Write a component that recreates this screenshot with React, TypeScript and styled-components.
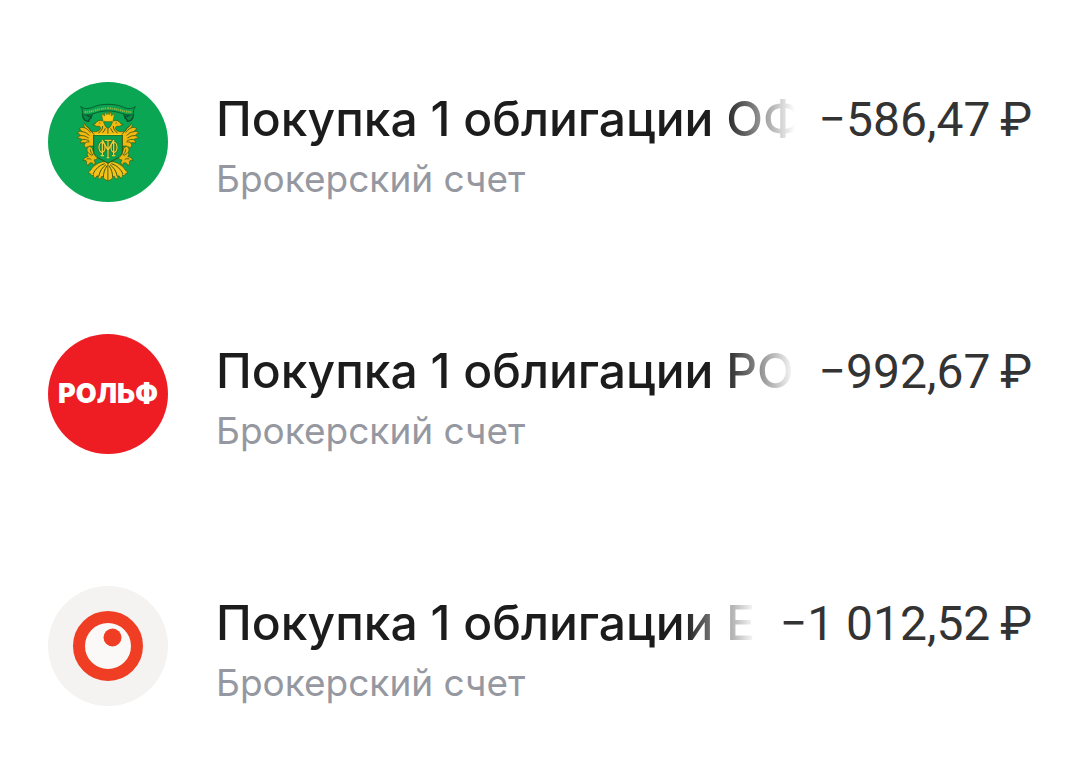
import React from "react";
import styled, { createGlobalStyle } from "styled-components";

const GlobalStyle = createGlobalStyle`
  *, *::before, *::after { box-sizing: border-box; }
  body {
    margin: 0;
    background: #ffffff;
    font-family: Inter, "Noto Sans", sans-serif;
  }
`;

const OperationList = styled.ul`
  display: flex;
  flex-direction: column;
  gap: 132px;
  margin: 0;
  padding: 82px 48px 64px;
  list-style: none;
`;

const Operation = styled.li`
  display: flex;
  align-items: center;
  gap: 48px;
`;

const Avatar = styled.div<{ $color: string }>`
  flex: none;
  display: flex;
  align-items: center;
  justify-content: center;
  width: 120px;
  height: 120px;
  border-radius: 50%;
  background: ${(p) => p.$color};
  overflow: hidden;

  svg {
    display: block;
    width: 100%;
    height: 100%;
  }
`;

const Wordmark = styled.span`
  color: #ffffff;
  font: 900 27px/32px Inter, "Noto Sans", sans-serif;
`;

const Details = styled.div`
  flex: 1;
  min-width: 0;
`;

const Headline = styled.div`
  display: flex;
  align-items: baseline;
  gap: 24px;
  line-height: 72px;
  white-space: nowrap;
`;

const Title = styled.span`
  flex: 1;
  min-width: 0;
  overflow: hidden;
  color: #1c1c1c;
  font-size: 48px;
  font-weight: 500;
  mask-image: linear-gradient(to left, transparent, #000 72px);
`;

const Amount = styled.span`
  color: #333333;
  font-family: Roboto, "Noto Sans", sans-serif;
  font-size: 48px;
`;

const Account = styled.div`
  color: #9598a0;
  font-size: 37px;
  line-height: 46px;
`;

function EagleHalf() {
  return (
    <g stroke="#3f5a12" strokeWidth="2" strokeLinejoin="round">
      <path
        d="M114 110c4-3 12-1 17 3 6 4 12 4 14-3M116 112c0 11 8 19 18 18-1-5 3-8 9-12"
        fill="#068a45"
        stroke="#0b4f2a"
        strokeWidth="4"
      />
      <path
        d="M122 136c-4 5-3 10 1 14-8-3-14-2-18 3 4 1 7 4 9 8-6-2-12 0-15 5 5 0 9 3 12 7-5 0-9 3-10 8 6-1 10 1 14 4-4 2-6 6-5 11 5-3 9-3 13-1-3 5-2 10 2 15 5-4 11-6 17-6h12v-38c-7 0-12-5-17-12-4-7-13-7-15-18z"
        fill="#f0b810"
      />
      <path
        d="M123 150c7 3 12 7 16 14M114 161c9 1 17 5 22 12M111 173c8-1 16 2 23 8M115 185c6-2 14 0 20 4M123 195c5-3 9-4 14-3M130 145c5 4 9 9 11 15"
        fill="none"
        strokeWidth="2.6"
      />
      <path
        d="M192 151c-5-2-9-7-11-14-3-8-9-11-16-9-5 1-8 4-11 9l-8 3c5 1 9 2 10 5 5 0 9-1 12 1 4 4 1 9-4 12-6 4-14 4-20 2 2 7 6 10 12 11h36z"
        fill="#f2b90f"
      />
      <path
        d="M166 135h3M176 144c0 9-5 16-13 21M184 151c-2 5-4 9-8 13"
        fill="none"
        strokeWidth="3"
      />
      <path
        d="M136 205c-8 4-9 13-4 18-3 5-3 9 1 13-8 0-14 5-16 12 5-2 9-1 11 2-2 5 0 10 4 14 1-6 4-9 9-10 5 0 8 4 9 9 4-6 4-12 0-17 7-1 12-5 14-11-9-5-18-12-19-25z"
        fill="#e9b714"
      />
      <path
        d="M139 214c0 6 3 12 8 17M133 224c3 4 7 7 12 8M128 243c5-2 10-1 14 2"
        fill="none"
        strokeWidth="2.6"
      />
      <path
        d="M192 252c-10-2-22-1-29 4-9 4-18 11-24 22-3-1-5 4-5 8 4 0 6 1 7 4 2 3 5 3 8 0-2 5 1 9 5 11 1-5 4-7 8-8-1 5 2 9 6 10 3-3 4-6 6-9 2 6 7 10 18 15z"
        fill="#f2c21a"
      />
      <path
        d="M182 257c-17 5-28 16-35 31M186 260c-12 9-19 20-22 36M189 263c-7 11-11 22-11 36"
        fill="none"
        strokeWidth="3"
      />
    </g>
  );
}

function FinanceMinistryEmblem() {
  return (
    <svg viewBox="12 12 360 360" aria-hidden="true">
      <EagleHalf />
      <g transform="matrix(-1 0 0 1 384 0)">
        <EagleHalf />
      </g>
      <path
        d="M110 86c12 8 24 7 38 1 14-6 28-8 44-8s30 2 44 8c14 6 26 7 38-1-5 7-7 14-5 24-16 3-29-1-42-6-23-7-47-7-70 0-13 5-26 9-42 6 2-10 0-17-5-24z"
        fill="#0aa351"
        stroke="#0b5c2e"
        strokeWidth="3"
      />
      <path
        d="M122 102c27 0 39-11 70-11s43 11 70 11"
        fill="none"
        stroke="#8fb440"
        strokeWidth="6"
        strokeDasharray="4 2 3 3 5 2"
      />
      <path
        d="M177 129l-5-23 10 8 1-12 6 8 3-10 3 10 6-8 1 12 10-8-5 23c-10 3-20 3-30 0z"
        fill="#f9c916"
        stroke="#5b6b12"
        strokeWidth="2"
      />
      <path
        d="M179 129c-8 4-8 10-4 15M205 129c8 4 8 10 4 15"
        fill="none"
        stroke="#e8c320"
        strokeWidth="3"
      />
      <path
        d="M149 171h86v52c0 15-24 20-43 33-19-13-43-18-43-33z"
        fill="#08a04e"
        stroke="#35510f"
        strokeWidth="3"
      />
      <path d="M151 169h82" stroke="#f6cf1c" strokeWidth="4" />
      <g fill="none" stroke="#365f17" strokeWidth="7">
        <ellipse cx="174" cy="208" rx="9" ry="15" />
        <ellipse cx="210" cy="208" rx="9" ry="15" />
        <path d="M175 186l17 31 17-31M175 186v47M209 186v47M182 187h20M192 187v52" />
      </g>
      <g fill="none" stroke="#e5d03a" strokeWidth="4">
        <ellipse cx="174" cy="208" rx="9" ry="15" />
        <ellipse cx="210" cy="208" rx="9" ry="15" />
        <path d="M175 186l17 31 17-31M175 186v47M209 186v47M182 187h20M192 187v52M170 233h10M204 233h10M188 239h8" />
      </g>
    </svg>
  );
}

function EyeLogo() {
  return (
    <svg viewBox="0 0 120 120" aria-hidden="true">
      <circle cx="60" cy="60" r="29" fill="#faf9f8" stroke="#ef3e23" strokeWidth="12" />
      <circle cx="64.5" cy="51.5" r="9" fill="#ef3e23" />
    </svg>
  );
}

const operations = [
  {
    title: "Покупка 1 облигации ОФ",
    amount: "−586,47\u2009₽",
    color: "#0aa653",
    logo: <FinanceMinistryEmblem />,
  },
  {
    title: "Покупка 1 облигации РО",
    amount: "−992,67\u2009₽",
    color: "#ee1c23",
    logo: <Wordmark>РОЛЬФ</Wordmark>,
  },
  {
    title: "Покупка 1 облигации Е",
    amount: "−1 012,52\u2009₽",
    color: "#f4f3f1",
    logo: <EyeLogo />,
  },
];

export default function App() {
  return (
    <main>
      <GlobalStyle />
      <OperationList>
        {operations.map((op) => (
          <Operation key={op.title}>
            <Avatar $color={op.color}>{op.logo}</Avatar>
            <Details>
              <Headline>
                <Title>{op.title}</Title>
                <Amount>{op.amount}</Amount>
              </Headline>
              <Account>Брокерский счет</Account>
            </Details>
          </Operation>
        ))}
      </OperationList>
    </main>
  );
}
